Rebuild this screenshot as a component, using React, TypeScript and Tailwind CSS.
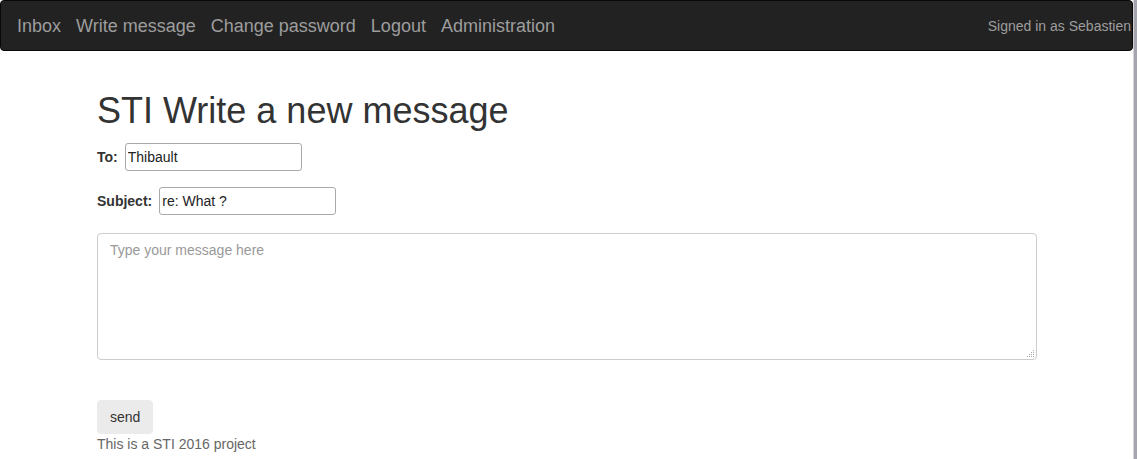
import React from "react";

function Grip() {
  const dots: [number, number][] = [
    [6, 0],
    [6, 2], [4, 2],
    [6, 4], [4, 4], [2, 4],
    [6, 6], [4, 6], [2, 6], [0, 6],
  ];
  return (
    <svg width="8" height="8" viewBox="0 0 8 8" className="absolute right-[2px] bottom-[2px]">
      {dots.map(([x, y], i) => (
        <rect key={i} x={x} y={y} width="1" height="1" fill="#aaa" />
      ))}
    </svg>
  );
}

export default function App() {
  const links = ["Inbox", "Write message", "Change password", "Logout", "Administration"];
  return (
    <div className="flex w-[1137px] h-[459px] overflow-hidden bg-white font-['Liberation_Sans',Arial,sans-serif] text-[14px] text-[#333]">
      <div className="w-[1133px] flex flex-col">
        <nav className="h-[51px] bg-[#222] border border-[#080808] rounded-[4px] flex items-center justify-between pl-[16px] pr-[1px]">
          <ul className="mt-[2px] flex items-center gap-[15px] text-[18px] text-[#9d9d9d]">
            {links.map((l) => (
              <li key={l}>{l}</li>
            ))}
          </ul>
          <span className="mt-[2px] text-[14px] text-[#9d9d9d]">Signed in as Sebastien</span>
        </nav>
        <main className="pl-[97px] w-[1037px]">
          <h1 className="mt-[40px] text-[36px] leading-[40px] text-[#333]">STI Write a new message</h1>
          <div className="mt-[12px] flex items-center">
            <label className="font-bold mr-[7px]">To:</label>
            <input
              readOnly
              value="Thibault"
              className="w-[177px] h-[28px] border border-[#aaa] rounded-[3px] px-[2px] text-[14px] text-[#222] outline-none"
            />
          </div>
          <div className="mt-[16px] flex items-center">
            <label className="font-bold mr-[7px]">Subject:</label>
            <input
              readOnly
              value="re: What ?"
              className="w-[177px] h-[28px] border border-[#aaa] rounded-[3px] px-[2px] text-[14px] text-[#222] outline-none"
            />
          </div>
          <div className="relative mt-[18px] w-[940px] h-[127px]">
            <textarea
              placeholder="Type your message here"
              className="block w-full h-full resize-none border border-[#ccc] rounded-[4px] px-[12px] py-[6px] text-[14px] leading-[20px] placeholder:text-[#999] outline-none"
            />
            <Grip />
          </div>
          <button className="mt-[40px] block h-[34px] px-[12px] bg-[#ebebeb] border border-[#ebebeb] rounded-[4px] text-[14px] text-[#333]">
            send
          </button>
          <p className="leading-[20px] text-[#666]">This is a STI 2016 project</p>
        </main>
      </div>
      <div className="w-[4px] h-full flex">
        <div className="w-[1px] bg-[#d4d4da]" />
        <div className="flex-1 bg-[#a4a5ad]" />
      </div>
    </div>
  );
}
